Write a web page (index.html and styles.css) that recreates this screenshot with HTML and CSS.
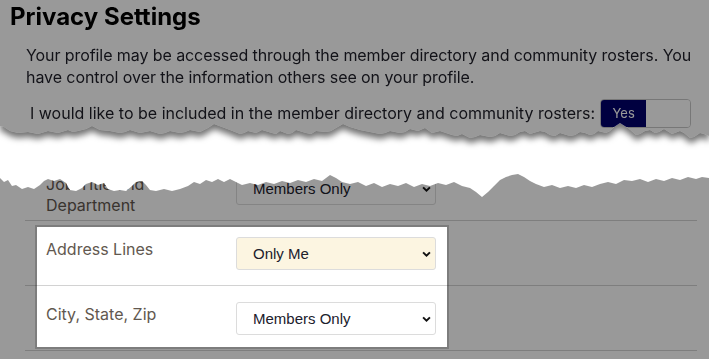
FILE: index.html
```html
<!DOCTYPE html>
<html lang="en">
<head>
  <meta charset="UTF-8" />
  <title>Privacy Settings</title>
  <link rel="stylesheet" href="styles.css">
</head>
<body>

  <!-- top piece of the torn page -->
  <div class="tear-top">
    <div class="sheet sheet-top">
      <h1 class="title">Privacy Settings</h1>
      <p class="intro">Your profile may be accessed through the member directory and community rosters. You have control over the information others see on your profile.</p>
      <div class="optin">
        <span>I would like to be included in the member directory and community rosters:</span>
        <div class="switch">
          <span class="switch-on">Yes</span>
          <span class="switch-off"></span>
        </div>
      </div>
    </div>
  </div>

  <!-- bottom piece, with the highlighted rows -->
  <div class="sheet sheet-bottom">
    <div class="fields">
      <div class="field">
        <label class="field-label">Job Title and Department</label>
        <div class="select">
          <select><option>Members Only</option></select>
          <svg class="chevron" viewBox="0 0 10 6"><path d="M1.2 1.2 5 4.8 8.8 1.2"/></svg>
        </div>
      </div>
      <div class="field">
        <label class="field-label">Address Lines</label>
        <div class="select private">
          <select><option>Only Me</option></select>
          <svg class="chevron" viewBox="0 0 10 6"><path d="M1.2 1.2 5 4.8 8.8 1.2"/></svg>
        </div>
      </div>
      <div class="field">
        <label class="field-label">City, State, Zip</label>
        <div class="select">
          <select><option>Members Only</option></select>
          <svg class="chevron" viewBox="0 0 10 6"><path d="M1.2 1.2 5 4.8 8.8 1.2"/></svg>
        </div>
      </div>
    </div>
    <div class="spotlight"></div>
  </div>

</body>
</html>
```

FILE: styles.css
```css
html, body {
  margin: 0;
  padding: 0;
  height: 100%;
  overflow: hidden;
  background: #fff;            /* the gap between the torn pieces */
  font-family: "Inter", "Liberation Sans", sans-serif;
  color: #1e1e28;
}

.sheet {
  position: relative;
  background: #fff;
}

/* shadow under the torn edge */
.tear-top {
  filter: drop-shadow(0 5px 3px rgba(0, 0, 0, 0.55));
}

.sheet-top {
  height: 150px;
  padding: 2px 0 0;
  box-sizing: border-box;
  clip-path: polygon(0 0, 709px 0,
    709px 136px, 704px 134px, 700px 133px, 694px 137px, 690px 138px, 684px 133px, 680px 131px,
    672px 134px, 664px 129px, 659px 132px, 655px 133px, 650px 130px, 645px 131px, 640px 134px,
    636px 135px, 628px 128px, 620px 123px, 614px 127px, 610px 131px, 606px 133px, 598px 131px,
    594px 134px, 590px 135px, 585px 133px, 580px 132px, 575px 135px, 570px 136px, 560px 133px,
    555px 136px, 550px 135px, 545px 132px, 540px 131px, 530px 134px, 525px 131px, 520px 132px,
    515px 135px, 510px 136px, 500px 133px, 495px 136px, 490px 137px, 480px 135px, 475px 137px,
    470px 138px, 462px 134px, 457px 136px, 452px 135px, 446px 133px, 440px 131px, 432px 133px,
    425px 128px, 418px 131px, 410px 129px, 405px 132px, 400px 133px, 390px 131px, 385px 133px,
    380px 134px, 370px 132px, 365px 131px, 360px 130px, 350px 127px, 343px 124px, 336px 128px,
    331px 131px, 326px 132px, 316px 131px, 311px 134px, 306px 133px, 296px 130px, 292px 133px,
    288px 134px, 280px 131px, 276px 134px, 272px 133px, 262px 130px, 256px 133px, 248px 131px,
    244px 133px, 240px 134px, 230px 130px, 222px 127px, 214px 124px, 208px 128px, 200px 132px,
    195px 131px, 190px 130px, 185px 132px, 180px 133px, 170px 131px, 165px 133px, 160px 134px,
    150px 131px, 145px 132px, 140px 133px, 130px 130px, 125px 132px, 120px 133px, 110px 131px,
    100px 130px, 92px 126px, 86px 129px, 78px 131px, 73px 132px, 68px 130px, 58px 133px,
    53px 132px, 48px 131px, 38px 134px, 33px 133px, 28px 132px, 18px 133px, 14px 132px,
    10px 131px, 4px 127px, 0 126px);
}

/* everything outside the highlight is dimmed */
.sheet-top::after {
  content: "";
  position: absolute;
  inset: 0;
  background: rgba(0, 0, 0, 0.4);
}

.title {
  margin: 0 0 13px 10px;
  font-size: 24px;
  line-height: 29px;
  font-weight: 700;
  color: #000;
}

.intro {
  margin: 0;
  padding: 0 6px 0 26px;
  font-size: 16px;
  line-height: 22.4px;
  letter-spacing: -0.08px;
}

.optin {
  display: flex;
  align-items: center;
  gap: 5px;
  margin-top: 10px;
  padding-left: 30px;
  font-size: 16px;
}

.switch {
  display: flex;
  width: 91px;
  height: 29px;
  box-sizing: border-box;
  border: 1px solid #c6c6c6;
  border-radius: 4px;
  overflow: hidden;
}

.switch-on {
  width: 45px;
  display: flex;
  align-items: center;
  justify-content: center;
  background: #00006b;
  color: #fff;
  font-size: 13px;
}

.switch-off {
  flex: 1;
  background: #fff;
}

.sheet-bottom {
  height: 209px;
  overflow: hidden;
  clip-path: polygon(0 28px, 4px 32px, 8px 30px, 12px 36px, 16px 35px, 22px 39px, 28px 37px,
    34px 39px, 40px 35px, 44px 31px, 48px 29px, 54px 31px, 60px 29px, 66px 33px, 70px 40px,
    76px 41px, 82px 38px, 86px 34px, 92px 32px, 98px 35px, 104px 33px, 108px 39px, 114px 41px,
    120px 40px, 126px 41px, 132px 36px, 136px 32px, 142px 31px, 146px 35px, 150px 40px,
    156px 41px, 164px 39px, 172px 41px, 180px 39px, 188px 36px, 194px 32px, 200px 34px,
    206px 30px, 212px 32px, 218px 29px, 224px 32px, 230px 29px, 236px 32px, 242px 35px,
    250px 33px, 258px 35px, 266px 32px, 274px 34px, 282px 31px, 290px 33px, 298px 30px,
    306px 32px, 314px 29px, 322px 31px, 330px 25px, 336px 28px, 342px 32px, 350px 34px,
    358px 32px, 366px 36px, 374px 33px, 382px 37px, 390px 34px, 398px 36px, 406px 33px,
    414px 37px, 422px 34px, 430px 36px, 438px 33px, 446px 35px, 454px 32px, 462px 36px,
    470px 38px, 476px 42px, 482px 47px, 488px 42px, 494px 36px, 500px 30px, 506px 27px,
    512px 25px, 518px 24px, 524px 27px, 530px 31px, 536px 34px, 544px 37px, 552px 35px,
    560px 38px, 568px 36px, 576px 38px, 584px 35px, 592px 37px, 600px 34px, 608px 32px,
    616px 34px, 624px 30px, 632px 31px, 640px 29px, 648px 32px, 656px 29px, 664px 31px,
    672px 28px, 680px 30px, 688px 27px, 696px 29px, 702px 27px, 709px 28px,
    709px 209px, 0 209px);
}

.fields {
  padding: 6px 12px 0 25px;
}

.field {
  display: flex;
  align-items: flex-start;
  padding: 16px 0 15px;
  border-bottom: 1px solid #d2d2d2;
}

.field-label {
  flex: 0 0 211px;
  box-sizing: border-box;
  margin: 2px 0 -11px;
  padding: 0 50px 0 21px;
  font-size: 16px;
  line-height: 21px;
  color: #62584f;
}

.select {
  position: relative;
  width: 200px;
}

.select select {
  appearance: none;
  display: block;
  width: 100%;
  height: 33px;
  margin: 0;
  padding: 0 30px 0 16px;
  border: 1px solid #dcdcdc;
  border-radius: 3px;
  background: #fff;
  font-family: "Liberation Sans", Arial, sans-serif;
  font-size: 15px;
  color: #20202c;
}

.select.private select {
  background: #fcf5e1;
}

.chevron {
  position: absolute;
  right: 5px;
  top: 14px;
  width: 9px;
  height: 6px;
  fill: none;
  stroke: #111;
  stroke-width: 2.2;
  pointer-events: none;
}

/* highlight box over the two address rows, dims the rest */
.spotlight {
  position: absolute;
  left: 37px;
  top: 77px;
  width: 410px;
  height: 120px;
  box-shadow: 0 0 0 2px rgba(0, 0, 0, 0.18), 0 0 0 1400px rgba(0, 0, 0, 0.4);
  pointer-events: none;
}
```
